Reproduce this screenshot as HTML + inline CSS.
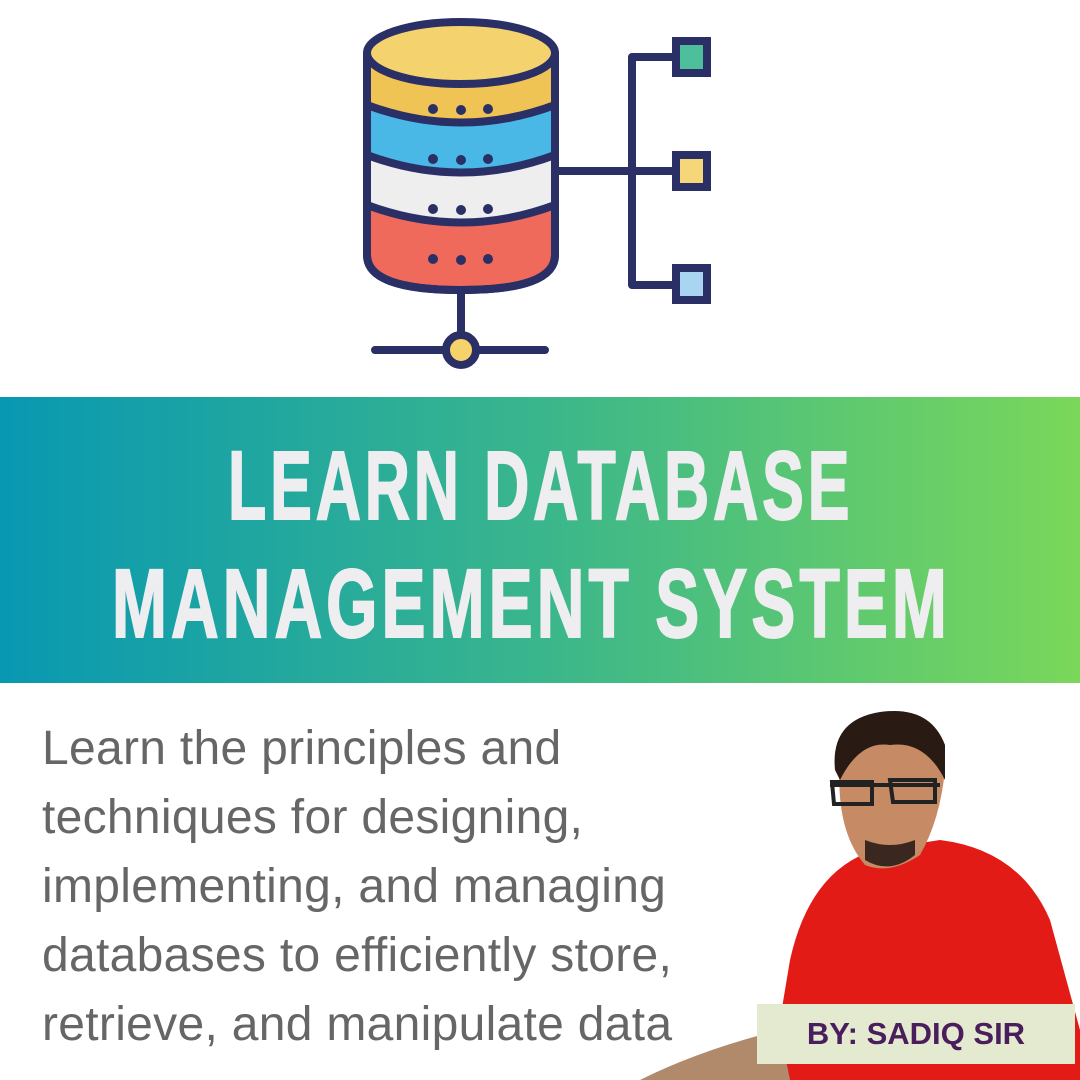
<!DOCTYPE html>
<html><head><meta charset="utf-8"><style>
body{margin:0;width:1080px;height:1080px;background:#fff;position:relative;overflow:hidden;font-family:"Liberation Sans",sans-serif}
.banner{position:absolute;left:0;top:397px;width:1080px;height:286px;background:linear-gradient(90deg,#0898b2 0%,#3ab68c 50%,#7ad75a 100%)}
.t{position:absolute;white-space:nowrap;color:#eeeef0;font-weight:bold;font-size:97px;line-height:1;letter-spacing:6px;transform-origin:0 0;-webkit-text-stroke:2px #eeeef0}
.body{position:absolute;left:42px;top:714px;color:#666;font-size:48px;line-height:69px;letter-spacing:0.3px;white-space:nowrap}
.lab{position:absolute;left:757px;top:1004px;width:318px;height:60px;background:#e4ead0;color:#4a1d5c;font-weight:bold;font-size:31px;line-height:60px;text-align:center}
</style></head><body>
<svg width="1080" height="397" style="position:absolute;left:0;top:0">
<g stroke="#2a2f66" stroke-width="8" fill="none" stroke-linecap="round">
<path d="M367 55 L367 255 Q367 290 461 290 Q555 290 555 255 L555 55" fill="#ef6a5a"/>
<path d="M367 55 V205 Q461 240 555 205 V55 Z" fill="#eeeeee" stroke="none"/>
<path d="M367 55 V155 Q461 190 555 155 V55 Z" fill="#4ab8e6" stroke="none"/>
<path d="M367 55 V105 Q461 140 555 105 V55 Z" fill="#efc454" stroke="none"/>
<path d="M367 105 Q461 140 555 105"/>
<path d="M367 155 Q461 190 555 155"/>
<path d="M367 205 Q461 240 555 205"/>
<path d="M367 55 L367 255 Q367 290 461 290 Q555 290 555 255 L555 55"/>
<ellipse cx="461" cy="53" rx="94" ry="31" fill="#f4d36e"/>
<path d="M555 171 H700 M632 57 V285 M632 57 H676 M632 285 H676 M461 290 V333 M375 350 H545"/>
<rect x="676" y="41" width="31" height="32" fill="#4dbf9a"/>
<rect x="676" y="155" width="31" height="32" fill="#f5d77a"/>
<rect x="676" y="268" width="31" height="32" fill="#a9d4f2"/>
<circle cx="461" cy="350" r="15" fill="#f5d36a"/>
</g>
<g fill="#2a2f66">
<circle cx="433" cy="109" r="5"/><circle cx="461" cy="110" r="5"/><circle cx="488" cy="109" r="5"/>
<circle cx="433" cy="159" r="5"/><circle cx="461" cy="160" r="5"/><circle cx="488" cy="159" r="5"/>
<circle cx="433" cy="209" r="5"/><circle cx="461" cy="210" r="5"/><circle cx="488" cy="209" r="5"/>
<circle cx="433" cy="259" r="5"/><circle cx="461" cy="260" r="5"/><circle cx="488" cy="259" r="5"/>
</g>
</svg>
<div class="banner"></div>
<div class="t" style="left:228px;top:437px;transform:scaleX(0.645)">LEARN DATABASE</div>
<div class="t" style="left:112px;top:555px;transform:scaleX(0.68)">MANAGEMENT SYSTEM</div>
<div class="body">Learn the principles and<br>techniques for designing,<br>implementing, and managing<br>databases to efficiently store,<br>retrieve, and manipulate data</div>
<svg width="440" height="380" style="position:absolute;left:640px;top:700px">
<path d="M130 380 L150 260 Q170 170 235 150 L300 140 Q380 150 410 220 L440 330 L440 380 Z" fill="#e31b16"/>
<path d="M0 380 Q60 350 140 330 L150 380 Z" fill="#b08a6a"/>
<path d="M200 60 Q195 130 225 165 Q250 175 280 155 Q300 120 305 70 Q300 30 250 25 Q205 30 200 60Z" fill="#c68a64"/>
<path d="M195 70 Q190 20 240 12 Q290 5 305 45 L305 80 Q285 40 250 45 Q220 40 200 80Z" fill="#2a1a14"/>
<path d="M190 85 H300 M192 82 h40 v22 h-38 z M250 80 h45 v22 h-42 z" stroke="#222" stroke-width="4" fill="none"/>
<path d="M225 160 Q250 175 275 155 L275 140 Q250 150 225 140Z" fill="#3a2820"/>
</svg>
<div class="lab">BY: SADIQ SIR</div>
</body></html>
